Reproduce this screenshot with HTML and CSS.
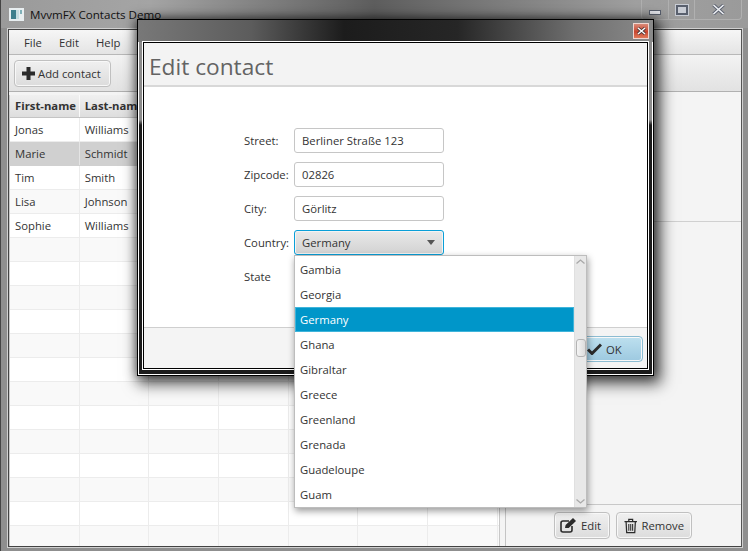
FILE: index.html
```html
<!DOCTYPE html>
<html lang="en">
<head>
  <meta charset="UTF-8" />
  <title>MvvmFX Contacts Demo</title>
  <link rel="stylesheet" href="styles.css">
</head>
<body>
  <div class="window">
    <div class="titlebar">
      <svg class="app-icon" width="15" height="13" viewBox="0 0 15 13">
        <rect width="15" height="13" fill="#e8eef0"/>
        <rect x="2" y="2" width="5" height="9" fill="#3f7f8c"/>
        <rect x="7" y="2" width="3" height="9" fill="#c7dde0"/>
        <rect x="11" y="2" width="2" height="4" fill="#7fb0b8"/>
      </svg>
      <span class="window-title">MvvmFX Contacts Demo</span>
      <div class="controls">
        <div class="control control-min"><span class="min-glyph"></span></div>
        <div class="control control-max"><span class="max-glyph"></span></div>
        <div class="control control-close">
          <svg width="13" height="11" viewBox="0 0 13 11"><path d="M1.5 1 L11.5 10 M11.5 1 L1.5 10" stroke="#5c6270" stroke-width="3.4"/><path d="M1.5 1 L11.5 10 M11.5 1 L1.5 10" stroke="#eef0f4" stroke-width="1.6"/></svg>
        </div>
      </div>
    </div>

    <div class="client">
      <div class="menubar">
        <span>File</span><span>Edit</span><span>Help</span>
      </div>
      <div class="toolbar">
        <button class="btn btn-add">
          <svg width="13" height="13" viewBox="0 0 13 13"><path d="M4.500 0h4v4.500H13v4H8.500V13h-4V8.500H0v-4h4.500z" fill="#2b2b2b"/></svg>
          Add contact
        </button>
      </div>
      <div class="content">
        <div class="table">
          <div class="head">
            <div class="th">First-name</div><div class="th">Last-name</div><div class="th"></div><div class="th"></div><div class="th"></div><div class="th"></div><div class="th"></div>
          </div>
          <div class="row"><i>Jonas</i><i>Williams</i><i></i><i></i><i></i><i></i><i></i></div>
          <div class="row sel"><i>Marie</i><i>Schmidt</i><i></i><i></i><i></i><i></i><i></i></div>
          <div class="row"><i>Tim</i><i>Smith</i><i></i><i></i><i></i><i></i><i></i></div>
          <div class="row odd"><i>Lisa</i><i>Johnson</i><i></i><i></i><i></i><i></i><i></i></div>
          <div class="row"><i>Sophie</i><i>Williams</i><i></i><i></i><i></i><i></i><i></i></div>
          <div class="row odd"><i></i><i></i><i></i><i></i><i></i><i></i><i></i></div>
          <div class="row"><i></i><i></i><i></i><i></i><i></i><i></i><i></i></div>
          <div class="row odd"><i></i><i></i><i></i><i></i><i></i><i></i><i></i></div>
          <div class="row"><i></i><i></i><i></i><i></i><i></i><i></i><i></i></div>
          <div class="row odd"><i></i><i></i><i></i><i></i><i></i><i></i><i></i></div>
          <div class="row"><i></i><i></i><i></i><i></i><i></i><i></i><i></i></div>
          <div class="row odd"><i></i><i></i><i></i><i></i><i></i><i></i><i></i></div>
          <div class="row"><i></i><i></i><i></i><i></i><i></i><i></i><i></i></div>
          <div class="row odd"><i></i><i></i><i></i><i></i><i></i><i></i><i></i></div>
          <div class="row"><i></i><i></i><i></i><i></i><i></i><i></i><i></i></div>
          <div class="row odd"><i></i><i></i><i></i><i></i><i></i><i></i><i></i></div>
          <div class="row"><i></i><i></i><i></i><i></i><i></i><i></i><i></i></div>
          <div class="row odd"><i></i><i></i><i></i><i></i><i></i><i></i><i></i></div>
        </div>
        <div class="side">
          <div class="side-top"></div>
          <div class="side-mid"></div>
          <div class="side-actions">
            <button class="btn btn-edit">
              <svg width="17" height="15" viewBox="0 0 17 15"><path d="M12 8v4a2 2 0 0 1-2 2H3a2 2 0 0 1-2-2V5a2 2 0 0 1 2-2h6" fill="none" stroke="#2b2b2b" stroke-width="1.6"/><path d="M5 10l.6-3L13 0l3 3-7.300 7z" fill="#2b2b2b"/></svg>
              Edit
            </button>
            <button class="btn btn-remove">
              <svg width="14" height="16" viewBox="0 0 14 16"><path d="M0.500 3.500h13M5 3V1h4v2M2.200 4l.6 11h8.400l.6-11" fill="none" stroke="#2b2b2b" stroke-width="1.300"/><path d="M5 6v7M7 6v7M9 6v7" stroke="#2b2b2b" stroke-width="1.100"/></svg>
              Remove
            </button>
          </div>
        </div>
      </div>
    </div>
  </div>

  <div class="dialog">
    <div class="dialog-bar">
      <div class="dialog-close">
        <svg width="9" height="8" viewBox="0 0 9 8"><path d="M1 1 L8 7 M8 1 L1 7" stroke="#4b3a3a" stroke-width="3"/><path d="M1 1 L8 7 M8 1 L1 7" stroke="#fff" stroke-width="1.400"/></svg>
      </div>
    </div>
    <div class="dialog-frame">
      <div class="dialog-client">
        <div class="dialog-head">Edit contact</div>
        <div class="dialog-body">
          <div class="form">
            <label>Street:</label><div class="input">Berliner Straße 123</div>
            <label>Zipcode:</label><div class="input">02826</div>
            <label>City:</label><div class="input">Görlitz</div>
            <label>Country:</label><div class="combo">Germany<span class="caret"></span></div>
            <label>State</label><div></div>
          </div>
        </div>
        <div class="dialog-foot">
          <button class="btn btn-ok">
            <svg width="15" height="12" viewBox="0 0 15 12"><path d="M1 6.500l4 4 9-9" fill="none" stroke="#2b2b2b" stroke-width="3"/></svg>
            OK
          </button>
        </div>
      </div>
    </div>
  </div>

  <div class="popup">
    <ul class="list">
      <li>Gambia</li>
      <li>Georgia</li>
      <li class="current">Germany</li>
      <li>Ghana</li>
      <li>Gibraltar</li>
      <li>Greece</li>
      <li>Greenland</li>
      <li>Grenada</li>
      <li>Guadeloupe</li>
      <li>Guam</li>
    </ul>
    <div class="scroll">
      <svg width="9" height="5" viewBox="0 0 9 5"><path d="M0.500 4.500L4.500 1l4 3.500" fill="none" stroke="#a8a8a8" stroke-width="1.300"/></svg>
      <div class="thumb"></div>
      <svg width="9" height="5" viewBox="0 0 9 5"><path d="M0.500 0.500L4.500 4l4-3.500" fill="none" stroke="#a8a8a8" stroke-width="1.300"/></svg>
    </div>
  </div>
</body>
</html>
```

FILE: styles.css
```css
* {
  box-sizing: border-box;
}
html, body {
  margin: 0;
  height: 100%;
  overflow: hidden;
}
body {
  position: relative;
  width: 748px;
  height: 551px;
  font-family: "Open Sans", "Noto Sans", sans-serif;
  font-size: 11.300px;
  color: #333;
  background: #8f8f8f;
}

/* main window */
.window {
  height: 551px;
  padding: 0 6px 4px 7px;
  border-left: 1px solid #444;
  background: linear-gradient(90deg, #9a9a9a 0, #a5a5a5 20%, #5e5e5e 50%, #a0a0a0 85%, #9a9a9a 100%) top / 100% 28px no-repeat, #8f8f8f;
}
.titlebar {
  display: flex;
  align-items: center;
  height: 29px;
  margin-left: -7px;
  margin-right: -6px;
  padding-left: 8px;
  position: relative;
}
.app-icon {
  margin-top: -1px;
}
.window-title {
  margin-left: 6px;
  font-size: 11.600px;
  color: #111;
}
.controls {
  display: flex;
  position: absolute;
  top: 0;
  left: 640px;
  height: 20px;
  border: 1px solid #b0b0b0;
  border-top: none;
  border-radius: 0 0 4px 4px;
}
.control {
  display: flex;
  align-items: center;
  justify-content: center;
  height: 100%;
  border-right: 1px solid #b0b0b0;
}
.control:last-child {
  border-right: none;
}
.control-min { width: 27px; }
.control-max { width: 26px; }
.control-close { width: 46px; }
.min-glyph {
  width: 12px;
  height: 5px;
  margin-top: 6px;
  background: #e6e8ee;
  border: 1px solid #59606e;
}
.max-glyph {
  width: 12px;
  height: 10px;
  background: #c8ccd4;
  border: 2px solid #59606e;
  box-shadow: 0 0 0 1px #c8ccd4;
}
.client {
  height: 518px;
  margin-top: 0;
  margin-right: 0;
  background: #f4f4f4;
  border: 1px solid #444;
  border-right-color: #555;
  outline: 1px solid #d0d0d0;
  display: flex;
  flex-direction: column;
}
.menubar {
  display: flex;
  gap: 17px;
  align-items: center;
  height: 25px;
  padding-left: 15px;
  background: linear-gradient(#f6f6f6, #e4e4e4);
  border-bottom: 1px solid #b8b8b8;
}
.toolbar {
  display: flex;
  align-items: center;
  height: 37px;
  padding-left: 5px;
  background: linear-gradient(#f3f3f3, #e2e2e2);
  border-bottom: 1px solid #b0b0b0;
}
.btn {
  display: inline-flex;
  align-items: center;
  gap: 3px;
  height: 27px;
  padding: 0 7px;
  font: inherit;
  color: #333;
  border: 1px solid #c0c0c0;
  border-radius: 4px;
  background: linear-gradient(#f0f0f0, #dcdcdc);
  box-shadow: inset 0 0 0 1px #f8f8f8;
}
.btn-add { width: 97px; }
.btn-edit { width: 56px; padding: 0 5px; gap: 4px; }
.btn-remove { width: 76px; padding: 0 7px; gap: 4px; }
.content {
  flex: 1;
  display: flex;
  min-height: 0;
}

/* contacts table */
.table {
  width: 491px;
  margin: 3px 0 0 0;
  overflow: hidden;
  background: #fff;
  border-left: 1px solid #c8c8c8;
  border-right: 1px solid #c8c8c8;
}
.head {
  display: flex;
  height: 23px;
  background: linear-gradient(#f0f0f0, #dedede);
  border-bottom: 1px solid #c4c4c4;
}
.th {
  flex: 0 0 69.700px;
  padding: 0 0 0 5px;
  line-height: 22px;
  font-weight: 700;
  border-right: 1px solid #fafafa;
  white-space: nowrap;
  overflow: hidden;
}
.row {
  display: flex;
  height: 24px;
  border-bottom: 1px solid #ececec;
}
.row i {
  flex: 0 0 69.700px;
  padding-left: 5px;
  font-style: normal;
  line-height: 23px;
  border-right: 1px solid #ececec;
}
.odd {
  background: #f9f9f9;
}
.sel {
  background: #d0d0d0;
  border-bottom-color: #d0d0d0;
}
.sel i {
  border-right-color: #e4e4e4;
}

/* details pane */
.side {
  flex: 1;
  display: flex;
  flex-direction: column;
  margin-left: 5px;
  border-left: 1px solid #c4c4c4;
}
.side-top {
  height: 130px;
  border-bottom: 1px solid #d0d0d0;
}
.side-mid {
  flex: 1;
  border-bottom: 1px solid #c8c8c8;
}
.side-actions {
  display: flex;
  justify-content: flex-end;
  gap: 6px;
  height: 41px;
  padding: 7px 49px 0 0;
}

/* edit dialog */
.dialog {
  position: absolute;
  left: 137px;
  top: 19px;
  width: 517px;
  height: 357px;
  border: 1px solid #000;
  box-shadow: 4px 5px 14px 3px rgba(0, 0, 0, 0.65), 0 0 10px rgba(0, 0, 0, 0.5);
  background: linear-gradient(180deg, #8c8c8c 0, #8c8c8c 100px, #1c1c1c 105px);
  display: flex;
  flex-direction: column;
}
.dialog-bar {
  flex: 0 0 22px;
  display: flex;
  justify-content: flex-end;
  align-items: flex-start;
  padding: 3px 4px 0 0;
  background: linear-gradient(90deg, #787878 0, #5c5c5c 22%, #1c1c1c 40%, #262626 62%, #6f6f6f 85%, #8a8a8a 100%);
}
.dialog-close {
  display: flex;
  align-items: center;
  justify-content: center;
  width: 16px;
  height: 16px;
  border: 1px solid #f0d6d0;
  background: linear-gradient(#d98a78, #c8452e 55%, #e07a5a);
}
.dialog-frame {
  flex: 1;
  padding: 0 4px 5px;
  border: 1px solid #fff;
  border-top: none;
  min-height: 0;
}
.dialog-client {
  height: 100%;
  display: flex;
  flex-direction: column;
  background: #f4f4f4;
  border: 1px solid #000;
  outline: 1px solid #fff;
}
.dialog-head {
  flex: 0 0 44px;
  padding: 6px 0 0 5px;
  font-size: 22.700px;
  line-height: 35px;
  color: #636363;
  background: #f3f3f3;
  border-bottom: 2px solid #d8d8d8;
}
.dialog-body {
  flex: 1;
  background: #fff;
  padding: 41px 0 0 100px;
}
.form {
  display: grid;
  grid-template-columns: 50px 150px;
  grid-auto-rows: 25px;
  row-gap: 9px;
  align-items: center;
}
.form label {
  color: #333;
}
.input {
  height: 25px;
  padding-left: 7px;
  line-height: 24px;
  color: #333;
  background: #fff;
  border: 1px solid #c6c6c6;
  border-radius: 3px;
}
.combo {
  display: flex;
  justify-content: space-between;
  align-items: center;
  height: 25px;
  padding: 0 7px;
  background: linear-gradient(#e9e9e9, #d2d2d2);
  border: 1px solid #0a9fd8;
  border-radius: 3px;
  box-shadow: inset 0 0 0 1px #f4f4f4;
}
.caret {
  margin-right: 1px;
  border-left: 4.500px solid transparent;
  border-right: 4.500px solid transparent;
  border-top: 5px solid #555;
}
.dialog-foot {
  flex: 0 0 41px;
  display: flex;
  justify-content: flex-end;
  padding: 8px 4px 0 0;
  background: #f4f4f4;
  border-top: 1px solid #cfcfcf;
}
.btn-ok {
  width: 62px;
  height: 26px;
  gap: 4px;
  padding-left: 5px;
  background: linear-gradient(#bde0ef, #9dc9e0);
  border-color: #8cbcd2;
}

/* country dropdown */
.popup {
  position: absolute;
  left: 294px;
  top: 255px;
  width: 293px;
  height: 253px;
  display: flex;
  background: #fff;
  border: 1px solid #bdbdbd;
  box-shadow: 1px 3px 7px rgba(0, 0, 0, 0.4);
}
.list {
  flex: 1;
  margin: 0;
  padding: 1px 0 0;
  list-style: none;
}
.list li {
  height: 25px;
  padding-left: 5px;
  line-height: 25px;
  color: #333;
}
.list .current {
  color: #fff;
  background: #0096c9;
  border: 1px solid #3fb4da;
  padding-left: 4px;
  line-height: 23px;
}
.scroll {
  flex: 0 0 12px;
  position: relative;
  display: flex;
  flex-direction: column;
  justify-content: space-between;
  align-items: center;
  padding: 3px 0;
  background: #e8e8e8;
  border-left: 1px solid #e0e0e0;
}
.thumb {
  position: absolute;
  left: 1px;
  top: 83px;
  width: 10px;
  height: 18px;
  border: 1px solid #b4b4b4;
  border-radius: 3px;
  background: linear-gradient(90deg, #f4f4f4, #dcdcdc);
}
```
